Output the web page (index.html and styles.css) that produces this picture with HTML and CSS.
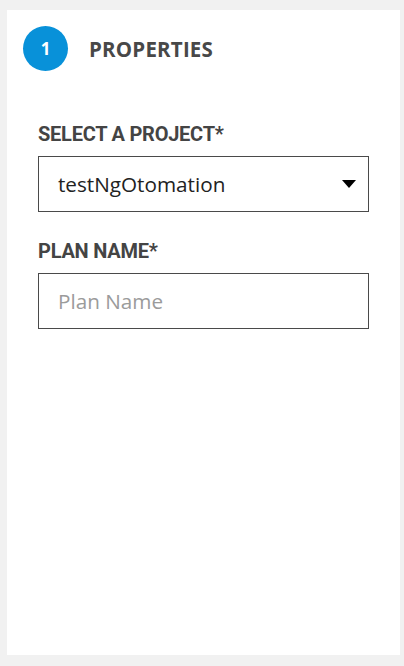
FILE: index.html
```html
<!DOCTYPE html>
<html>
<head>
<meta charset="utf-8">
<link rel="stylesheet" href="styles.css">
</head>
<body>
<div class="card">
  <div class="step-header">
    <div class="step-num">1</div>
    <div class="step-title">PROPERTIES</div>
  </div>
  <div class="form">
    <div class="field">
      <label class="field-label">SELECT A PROJECT*</label>
      <div class="select-box">
        <span class="select-value">testNgOtomation</span>
        <svg class="caret" width="14" height="8" viewBox="0 0 14 8"><path d="M0 0 H14 L7 8 Z" fill="#000"/></svg>
      </div>
    </div>
    <div class="field">
      <label class="field-label">PLAN NAME*</label>
      <div class="input-box">
        <span class="placeholder">Plan Name</span>
      </div>
    </div>
  </div>
</div>
</body>
</html>
```
FILE: styles.css
```css
html, body {
  margin: 0;
  padding: 0;
}
body {
  background: #f1f1f1;
  width: 404px;
  height: 666px;
  overflow: hidden;
}
.card {
  box-sizing: border-box;
  margin: 10px 4px 0 7px;
  height: 645px;
  background: #fff;
  padding: 16px 31px 0 16px;
}
.step-header {
  display: flex;
  align-items: center;
  gap: 21px;
}
.step-num {
  width: 45px;
  height: 45px;
  border-radius: 50%;
  background: #0891d9;
  color: #fff;
  font-family: "Open Sans", sans-serif;
  font-weight: 700;
  font-size: 17px;
  display: flex;
  align-items: center;
  justify-content: center;
}
.step-title {
  font-family: "Open Sans", sans-serif;
  font-weight: 700;
  font-size: 20.5px;
  color: #484848;
  letter-spacing: 0.2px;
}
.form {
  padding-left: 15px;
  margin-top: 51px;
  display: flex;
  flex-direction: column;
  gap: 27px;
}
.field {
  display: flex;
  flex-direction: column;
  gap: 10px;
}
.field-label {
  font-family: Roboto, sans-serif;
  font-weight: 700;
  font-size: 20px;
  line-height: 24px;
  letter-spacing: -0.25px;
  color: #444;
}
.select-box, .input-box {
  box-sizing: border-box;
  height: 56px;
  border: 1px solid #4a4a4a;
  display: flex;
  align-items: center;
  padding: 0 12px 0 19px;
  font-family: "Open Sans", sans-serif;
  font-size: 20.7px;
}
.select-box {
  justify-content: space-between;
}
.select-value {
  color: #222;
}
.placeholder {
  color: #9b9b9b;
}
```
